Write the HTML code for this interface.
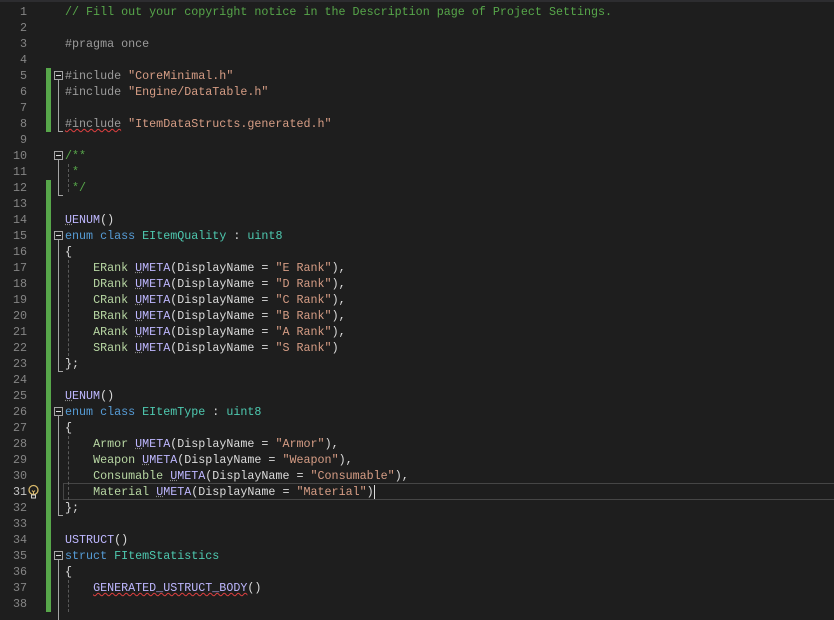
<!DOCTYPE html>
<html><head><meta charset="utf-8"><style>
body{margin:0;width:834px;height:612px;background:#1e1e1e;overflow:hidden;position:relative;font-family:"Liberation Mono",monospace;font-size:11.7px}
.n{position:absolute;left:0;width:27px;text-align:right;color:#858585;height:16px;line-height:16px}
.l{position:absolute;left:65px;white-space:pre;height:16px;line-height:16px;color:#dcdcdc}
.c{color:#57a64a}.p{color:#9b9b9b}.s{color:#d69d85}.k{color:#569cd6}.t{color:#4ec9b0}.m{color:#beb7ff}.e{color:#b8d7a3}
.g{position:absolute;left:46px;width:5px;background:#57a64a}
.fb{position:absolute;left:54px;width:7px;height:7px;border:1px solid #a5a5a5}
.fb:after{content:"";position:absolute;left:1px;top:3px;width:5px;height:1px;background:#dcdcdc}
.fl{position:absolute;left:58px;width:4px;border-left:1px solid #a5a5a5;border-bottom:1px solid #a5a5a5}
.ig{position:absolute;left:68px;border-left:1px dashed #5a5a5a}
.sq{text-decoration:underline wavy #e04040;text-decoration-thickness:1px}
.dt{text-decoration:underline dotted #8a8a8a}
</style></head><body>
<div style="position:absolute;left:0;top:0;width:834px;height:2px;background:#2d2d30"></div>
<div class="g" style="top:68px;height:64px"></div>
<div class="g" style="top:180px;height:432px"></div>
<div style="position:absolute;left:63px;top:483px;width:771px;height:15px;border:1px solid #464646"></div>

<div class="fb" style="top:71px"></div><div class="fl" style="top:80px;height:51px"></div>
<div class="fb" style="top:151px"></div><div class="fl" style="top:160px;height:35px"></div>
<div class="fb" style="top:231px"></div><div class="fl" style="top:240px;height:131px"></div>
<div class="fb" style="top:407px"></div><div class="fl" style="top:416px;height:99px"></div>
<div class="fb" style="top:551px"></div><div class="fl" style="top:560px;height:60px;border-bottom:none"></div>
<div class="ig" style="top:164px;height:28px"></div>
<div class="ig" style="top:260px;height:96px"></div>
<div class="ig" style="top:436px;height:64px"></div>
<div class="ig" style="top:580px;height:32px"></div>

<div class="n" style="top:4px">1</div><div class="n" style="top:20px">2</div><div class="n" style="top:36px">3</div><div class="n" style="top:52px">4</div><div class="n" style="top:68px">5</div><div class="n" style="top:84px">6</div><div class="n" style="top:100px">7</div><div class="n" style="top:116px">8</div><div class="n" style="top:132px">9</div><div class="n" style="top:148px">10</div><div class="n" style="top:164px">11</div><div class="n" style="top:180px">12</div><div class="n" style="top:196px">13</div><div class="n" style="top:212px">14</div><div class="n" style="top:228px">15</div><div class="n" style="top:244px">16</div><div class="n" style="top:260px">17</div><div class="n" style="top:276px">18</div><div class="n" style="top:292px">19</div><div class="n" style="top:308px">20</div><div class="n" style="top:324px">21</div><div class="n" style="top:340px">22</div><div class="n" style="top:356px">23</div><div class="n" style="top:372px">24</div><div class="n" style="top:388px">25</div><div class="n" style="top:404px">26</div><div class="n" style="top:420px">27</div><div class="n" style="top:436px">28</div><div class="n" style="top:452px">29</div><div class="n" style="top:468px">30</div><div class="n" style="top:484px;color:#c6c6c6">31</div><div class="n" style="top:500px">32</div><div class="n" style="top:516px">33</div><div class="n" style="top:532px">34</div><div class="n" style="top:548px">35</div><div class="n" style="top:564px">36</div><div class="n" style="top:580px">37</div><div class="n" style="top:596px">38</div>

<svg style="position:absolute;left:27px;top:484px" width="13" height="16" viewBox="0 0 13 16"><circle cx="6.5" cy="6" r="4.5" fill="none" stroke="#d8b86a" stroke-width="1.3"/><path d="M5 6.5l1.5 1.5 1.5-1.5M6.5 8v3" stroke="#d8b86a" fill="none"/><rect x="4.5" y="11" width="4" height="3" fill="none" stroke="#d0d0d0"/></svg>

<div class="l c" style="top:4px">// Fill out your copyright notice in the Description page of Project Settings.</div>
<div class="l p" style="top:36px">#pragma once</div>
<div class="l" style="top:68px"><span class="p">#include</span> <span class="s">"CoreMinimal.h"</span></div>
<div class="l" style="top:84px"><span class="p">#include</span> <span class="s">"Engine/DataTable.h"</span></div>
<div class="l" style="top:116px"><span class="p sq">#include</span> <span class="s">"ItemDataStructs.generated.h"</span></div>
<div class="l c" style="top:148px">/**</div>
<div class="l c" style="top:164px"> *</div>
<div class="l c" style="top:180px"> */</div>
<div class="l" style="top:212px"><span class="m"><span class="dt">U</span>ENUM</span>()</div>
<div class="l" style="top:228px"><span class="k">enum</span> <span class="k">class</span> <span class="t">EItemQuality</span> : <span class="t">uint8</span></div>
<div class="l" style="top:244px">{</div>
<div class="l" style="top:260px">    <span class="e">ERank</span> <span class="m"><span class="dt">U</span>META</span>(DisplayName = <span class="s">"E Rank"</span>),</div>
<div class="l" style="top:276px">    <span class="e">DRank</span> <span class="m"><span class="dt">U</span>META</span>(DisplayName = <span class="s">"D Rank"</span>),</div>
<div class="l" style="top:292px">    <span class="e">CRank</span> <span class="m"><span class="dt">U</span>META</span>(DisplayName = <span class="s">"C Rank"</span>),</div>
<div class="l" style="top:308px">    <span class="e">BRank</span> <span class="m"><span class="dt">U</span>META</span>(DisplayName = <span class="s">"B Rank"</span>),</div>
<div class="l" style="top:324px">    <span class="e">ARank</span> <span class="m"><span class="dt">U</span>META</span>(DisplayName = <span class="s">"A Rank"</span>),</div>
<div class="l" style="top:340px">    <span class="e">SRank</span> <span class="m"><span class="dt">U</span>META</span>(DisplayName = <span class="s">"S Rank"</span>)</div>
<div class="l" style="top:356px">};</div>
<div class="l" style="top:388px"><span class="m"><span class="dt">U</span>ENUM</span>()</div>
<div class="l" style="top:404px"><span class="k">enum</span> <span class="k">class</span> <span class="t">EItemType</span> : <span class="t">uint8</span></div>
<div class="l" style="top:420px">{</div>
<div class="l" style="top:436px">    <span class="e">Armor</span> <span class="m"><span class="dt">U</span>META</span>(DisplayName = <span class="s">"Armor"</span>),</div>
<div class="l" style="top:452px">    <span class="e">Weapon</span> <span class="m"><span class="dt">U</span>META</span>(DisplayName = <span class="s">"Weapon"</span>),</div>
<div class="l" style="top:468px">    <span class="e">Consumable</span> <span class="m"><span class="dt">U</span>META</span>(DisplayName = <span class="s">"Consumable"</span>),</div>
<div class="l" style="top:484px">    <span class="e">Material</span> <span class="m"><span class="dt">U</span>META</span>(DisplayName = <span class="s">"Material"</span>)<span style="border-left:1px solid #dcdcdc"></span></div>
<div class="l" style="top:500px">};</div>
<div class="l" style="top:532px"><span class="m">USTRUCT</span>()</div>
<div class="l" style="top:548px"><span class="k">struct</span> <span class="t">FItemStatistics</span></div>
<div class="l" style="top:564px">{</div>
<div class="l" style="top:580px">    <span class="m sq">GENERATED_USTRUCT_BODY</span>()</div>
</body></html>
